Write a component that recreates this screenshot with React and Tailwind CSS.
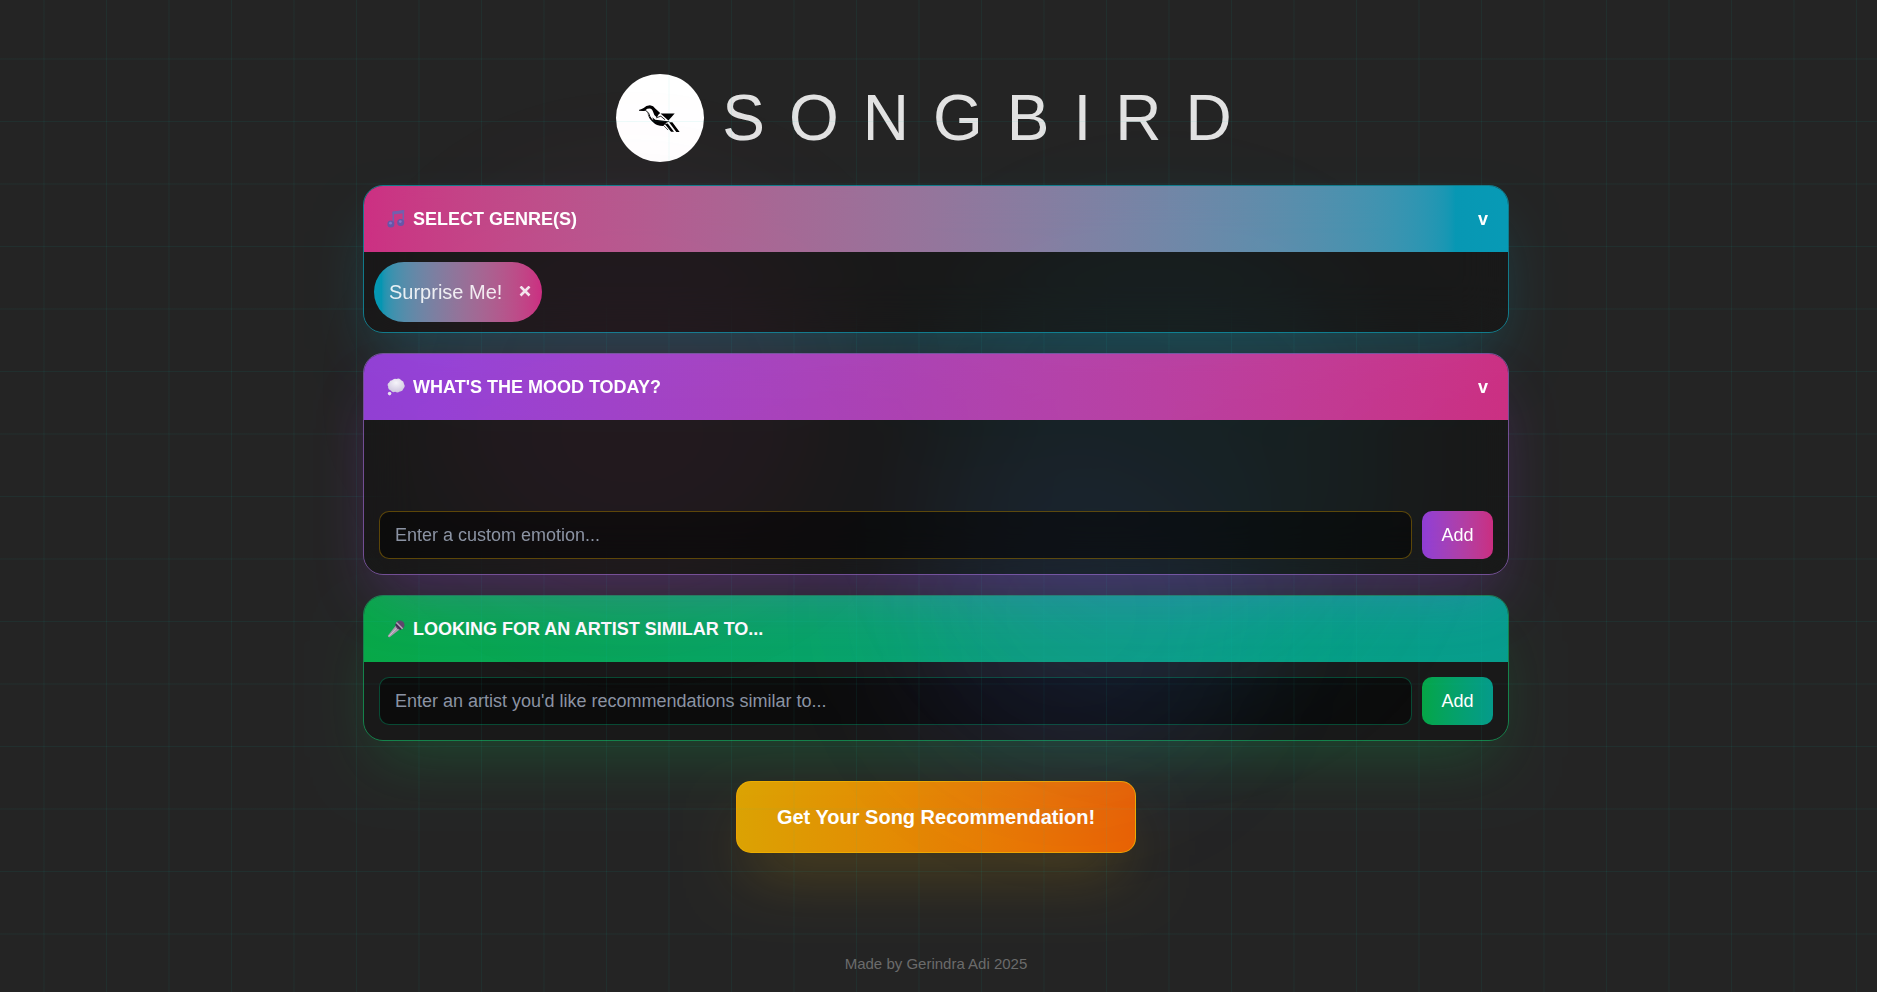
import { useState } from "react";

const GRID =
  "absolute inset-0 z-10 pointer-events-none bg-[linear-gradient(to_right,transparent_43px,rgba(0,200,180,0.03)_43px,rgba(0,200,180,0.03)_45px,transparent_45px,transparent_106px,rgba(0,200,180,0.07)_106px,rgba(0,200,180,0.07)_107px,transparent_107px),linear-gradient(to_bottom,transparent_58px,rgba(0,200,180,0.03)_58px,rgba(0,200,180,0.03)_60px,transparent_60px,transparent_121px,rgba(0,200,180,0.07)_121px,rgba(0,200,180,0.07)_122px,transparent_122px)] bg-[size:125px_125px]";

function BirdIcon() {
  return (
    <svg viewBox="84 112 130 88" className="h-[29px] w-[43px]" fill="#000" aria-hidden="true">
      <path d="M84 131 L98 124 Q105 116 117 116 Q128 117 133 126 L148 139 Q142 142 138 153 Q129 148 127 137 Q124 127 116 126 Q108 126 104 130 L97 133 Z" />
      <path d="M84 131 L104 131 Q115 139 117 150 Q121 161 134 168" fill="none" stroke="#000" strokeWidth="3" />
      <path d="M109 138 Q113 157 124 165 Q137 179 157 179 L168 168 L178 165 L133 160 L124 152 L128 163 Q116 155 109 138 Z" />
      <path d="M149 141 H192 L173 162 Z" />
      <path d="M136 154 L150 149 L163 160" fill="none" stroke="#000" strokeWidth="2.5" />
      <path d="M162 173 L171 171 L190 196 H181 Z M175 167 L185 167 L207 197 H197 Z" />
      <path d="M158 177 L172 191" stroke="#000" strokeWidth="2" />
    </svg>
  );
}

function NoteIcon() {
  return (
    <svg viewBox="0 0 18 18" className="h-[18px] w-[18px]" aria-hidden="true">
      <path d="M6.3 14 V2.6 L16.3 1 V12.4" fill="none" stroke="#7260ae" strokeWidth="1.6" />
      <path d="M5.5 1.6 L17.1 0.2 V3.2 L5.5 4.6 Z" fill="#7260ae" />
      <circle cx="3.9" cy="14" r="3.5" fill="#6656a8" />
      <circle cx="13.7" cy="12.4" r="3.5" fill="#6656a8" />
      <circle cx="3.5" cy="13.2" r="1.4" fill="#8474c4" />
      <circle cx="13.3" cy="11.6" r="1.4" fill="#8474c4" />
    </svg>
  );
}

function ThoughtIcon() {
  return (
    <svg viewBox="0 0 18 18" className="h-[18px] w-[18px]" aria-hidden="true">
      <defs>
        <radialGradient id="cloud" cx="0.5" cy="0.3" r="0.75">
          <stop offset="0" stopColor="#f6f4fa" />
          <stop offset="1" stopColor="#cbc2dc" />
        </radialGradient>
      </defs>
      <path
        d="M5 2.2 Q7 0 9.4 1 Q12.6 -0.2 14.2 2.2 Q17.2 3.2 16.9 6 Q18.8 8.4 16.4 10.8 Q15.6 13.6 12.8 13.4 Q10.6 15.2 8.2 13.8 Q5.4 15 3.8 12.4 Q0.6 11.6 1.2 8.6 Q-0.4 6 2.2 4.4 Q2.8 2.2 5 2.2 Z"
        fill="url(#cloud)"
      />
      <circle cx="2.6" cy="15.6" r="1.8" fill="#e6e0f0" />
    </svg>
  );
}

function MicIcon() {
  return (
    <svg viewBox="0 0 18 18" className="h-[18px] w-[18px]" aria-hidden="true">
      <path d="M8.8 5.4 L12.6 9.4 L2.6 17.2 Q1 17.6 0.8 15.8 Z" fill="#a79bab" />
      <path d="M10 7.6 L2 16.2" stroke="#cfc4cf" strokeWidth="1" />
      <circle cx="13" cy="5" r="4.5" fill="#5c4668" />
      <path d="M9.4 2.6 L15.6 8.8" stroke="#b8acbc" strokeWidth="1.4" />
      <path d="M8.6 4.2 L13.8 9.4" stroke="#3c2c4c" strokeWidth="1.4" />
    </svg>
  );
}

const headerBase =
  "flex h-[66px] w-full items-center justify-between pr-5 pl-[23px] text-left text-lg font-bold text-white";
const cardBase = "overflow-hidden rounded-[20px] border";
const inputBase =
  "h-12 min-w-0 flex-1 rounded-[10px] border bg-black/50 px-[15px] text-lg text-white outline-none placeholder:text-[#8b93a3]";
const addBase = "h-12 w-[71px] rounded-[10px] text-lg text-white";

export default function App() {
  const [picked, setPicked] = useState(true);
  const [emotion, setEmotion] = useState("");
  const [artist, setArtist] = useState("");

  return (
    <div className="relative min-h-screen overflow-hidden bg-[#242424] font-['Liberation_Sans',Arial,sans-serif] text-white/87">
      <div className="pointer-events-none absolute top-[200px] left-[23%] h-[380px] w-[400px] rounded-full bg-pink-500/7 blur-3xl" />
      <div className="pointer-events-none absolute top-[240px] left-[50%] h-[460px] w-[440px] rounded-full bg-cyan-500/8 blur-3xl" />
      <div className="pointer-events-none absolute top-[440px] left-[48%] h-[340px] w-[340px] rounded-full bg-indigo-500/9 blur-3xl" />
      <div className={GRID} />

      <div className="flex flex-col items-center pt-[74px] pr-[5px] pb-4">
        <header className="flex items-center gap-[18px]">
          <div className="flex h-[88px] w-[88px] items-center justify-center rounded-full bg-white">
            <BirdIcon />
          </div>
          <h1 className="text-[64px] leading-none tracking-[24px]">SONGBIRD</h1>
        </header>

        <main className="mt-[23px] flex w-full max-w-[1146px] flex-col gap-5">
          <section className={`${cardBase} relative z-20 border-cyan-400/50 shadow-[0_31px_62px_-15px] shadow-cyan-500/25 backdrop-blur-xl`}>
            <button
              type="button"
              className={`${headerBase} bg-linear-to-r from-pink-500/80 to-cyan-500/80`}
            >
              <span className="flex items-center gap-2">
                <NoteIcon />
                SELECT GENRE(S)
              </span>
              <span>v</span>
            </button>
            <div className="flex min-h-20 bg-black/30 p-2.5">
              {picked && (
                <div className="flex h-[60px] items-center gap-4 rounded-full bg-linear-to-r from-cyan-500/80 to-pink-500/80 pr-2.5 pl-[15px] text-xl">
                  Surprise Me!
                  <button
                    type="button"
                    aria-label="Remove Surprise Me!"
                    onClick={() => setPicked(false)}
                    className="flex h-5 w-[14px] items-center justify-center"
                  >
                    <svg viewBox="0 0 12 12" className="h-3 w-3" aria-hidden="true">
                      <path d="M1.5 0.5 L10.5 9.5 M10.5 0.5 L1.5 9.5" stroke="#f3e4ec" strokeWidth="2.6" />
                    </svg>
                  </button>
                </div>
              )}
            </div>
          </section>

          <section className={`${cardBase} relative z-20 border-purple-400/50 shadow-[0_31px_62px_-15px] shadow-purple-500/25 backdrop-blur-xl`}>
            <button
              type="button"
              className={`${headerBase} bg-linear-to-r from-purple-500/80 to-pink-500/80`}
            >
              <span className="flex items-center gap-2">
                <ThoughtIcon />
                WHAT&apos;S THE MOOD TODAY?
              </span>
              <span>v</span>
            </button>
            <form className="flex gap-2.5 bg-black/30 px-[15px] pt-[91px] pb-[15px]" onSubmit={(e) => e.preventDefault()}>
              <input
                aria-label="Custom emotion"
                placeholder="Enter a custom emotion..."
                value={emotion}
                onChange={(e) => setEmotion(e.target.value)}
                className={`${inputBase} border-yellow-500/35`}
              />
              <button type="submit" className={`${addBase} bg-linear-to-r from-purple-500/80 to-pink-500/80`}>
                Add
              </button>
            </form>
          </section>

          <section className={`${cardBase} border-green-400/50 shadow-[0_31px_62px_-15px] shadow-green-500/20`}>
            <h2 className={`${headerBase} bg-linear-to-r from-green-500/80 to-teal-500/80`}>
              <span className="flex items-center gap-2">
                <MicIcon />
                LOOKING FOR AN ARTIST SIMILAR TO...
              </span>
            </h2>
            <form className="flex gap-2.5 bg-black/30 p-[15px]" onSubmit={(e) => e.preventDefault()}>
              <input
                aria-label="Similar artist"
                placeholder="Enter an artist you'd like recommendations similar to..."
                value={artist}
                onChange={(e) => setArtist(e.target.value)}
                className={`${inputBase} border-emerald-500/35`}
              />
              <button type="submit" className={`${addBase} bg-linear-to-r from-green-500/80 to-teal-500/80`}>
                Add
              </button>
            </form>
          </section>
        </main>

        <button
          type="button"
          className="mt-10 h-[72px] rounded-[15px] border border-yellow-500/80 bg-linear-to-r from-yellow-500/90 to-orange-500/90 px-10 text-xl font-bold text-white shadow-[0_31px_62px_-15px] shadow-yellow-500/25"
        >
          Get Your Song Recommendation!
        </button>

        <footer className="mt-[101px] text-[15px] leading-5 text-[#6b6b6b]">Made by Gerindra Adi 2025</footer>
      </div>
    </div>
  );
}
